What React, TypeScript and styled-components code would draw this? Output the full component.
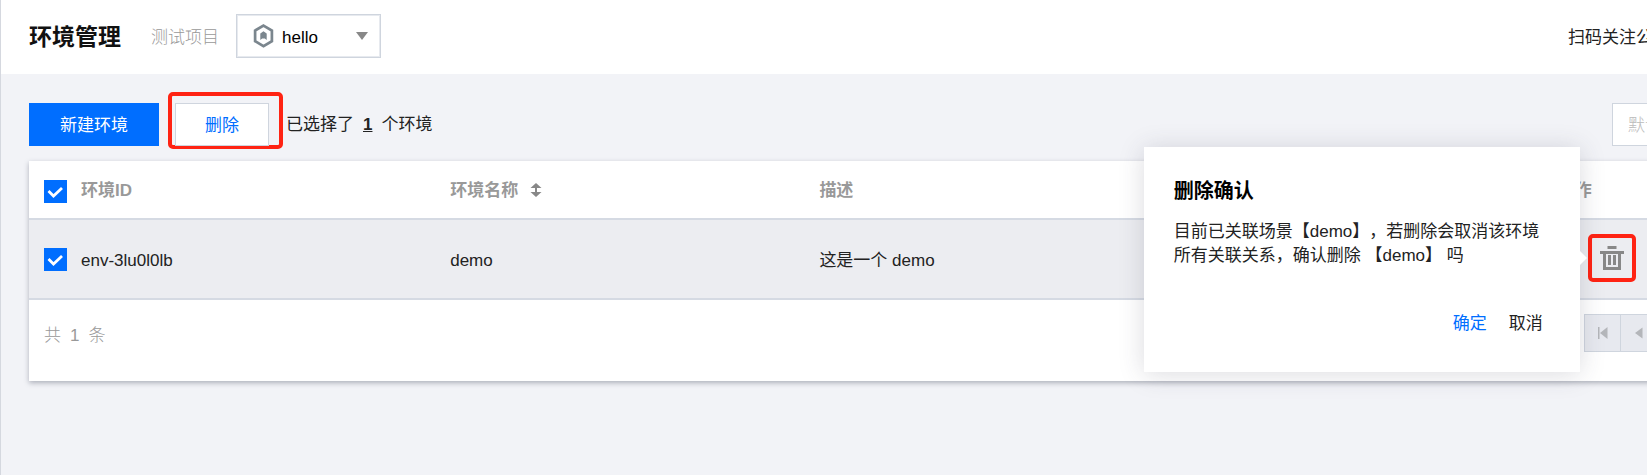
import React, { useState } from 'react';
import styled, { createGlobalStyle } from 'styled-components';

const BLUE = '#006eff';
const LINE = '#cfd5de';
const MUTED = '#999';

const GlobalStyle = createGlobalStyle`
  *, *::before, *::after { box-sizing: border-box; }
  body {
    margin: 0;
    background: #f2f3f7;
    color: #222;
    font: 17px/24px "Liberation Sans", "Noto Sans CJK SC", sans-serif;
    text-spacing-trim: space-all;
  }
  button, input, select { font: inherit; color: inherit; margin: 0; }
`;

const Viewport = styled.div`
  min-height: 100vh;
  overflow: hidden;
  border-left: 1px solid #d5d8df;
`;

/* The console keeps a wide canvas that runs past the right edge of the window. */
const Page = styled.div`
  width: calc(100% + 308px);
`;

const Header = styled.header`
  display: flex;
  align-items: center;
  height: 74px;
  padding: 0 28px;
  background: #fff;
`;

const Title = styled.h1`
  margin: 0 30px 0 0;
  font-size: 23px;
  line-height: 32px;
  color: #111;
`;

const ProjectLabel = styled.label`
  margin: 0 17px 0 0;
  padding-top: 2px;
  color: ${MUTED};
  font-weight: 300;
`;

const SelectBox = styled.div`
  display: flex;
  align-items: center;
  width: 145px;
  height: 44px;
  margin: 0 auto 2px 0;
  padding: 0 12px 0 16px;
  border: 1px solid ${LINE};
  outline: 1px solid #e7eaef;
  outline-offset: -2px;
  background: #fff;
`;

const ProjectSelect = styled.select`
  flex: 1;
  min-width: 0;
  height: 40px;
  padding: 4px 0 0 8px;
  border: 0;
  outline: 0;
  background: transparent;
  appearance: none;
  color: #000;
`;

const FollowLink = styled.a`
  width: 359px;
  padding-top: 2px;
  color: #222;
  text-decoration: none;
`;

const Main = styled.main`
  padding: 29px 28px;
`;

const Toolbar = styled.div`
  display: flex;
  align-items: center;
  height: 43px;
  margin-bottom: 15px;
`;

const Button = styled.button<{ $primary?: boolean }>`
  height: 43px;
  padding: 2px ${p => (p.$primary ? 30 : 29)}px 0;
  border: 1px solid ${p => (p.$primary ? BLUE : LINE)};
  background: ${p => (p.$primary ? BLUE : '#fff')};
  color: ${p => (p.$primary ? '#fff' : BLUE)};
  cursor: pointer;
`;

const Highlight = styled.div`
  display: inline-flex;
  align-items: center;
  justify-content: center;
  border: 4px solid #ff2313;
  border-radius: 5px;
`;

const ButtonHighlight = styled(Highlight)`
  align-self: flex-start;
  align-items: flex-start;
  height: 57px;
  margin: -11px 3px 0 9px;
  padding: 7px 10px 0 3px;
`;

const Count = styled.strong`
  margin: 0 9px;
  text-decoration: underline;
`;

const Search = styled.input`
  width: 315px;
  height: 43px;
  margin-left: auto;
  padding: 2px 15px 0;
  border: 1px solid ${LINE};
  background: #fff;
  &::placeholder { color: #bbb; font-weight: 300; }
`;

const Card = styled.section`
  background: #fff;
  box-shadow: 0 2px 5px rgba(54, 58, 80, 0.36);
`;

const Table = styled.table`
  width: 100%;
  border-collapse: separate;
  border-spacing: 0;
  table-layout: fixed;
`;

const CheckColumn = styled.col`
  width: 52px;
`;

const HeadCell = styled.th`
  height: 59px;
  padding: 3px 0 0;
  border-bottom: 2px solid #d5dae3;
  color: ${MUTED};
  text-align: left;
  &:first-child { padding-left: 15px; }
`;

const Cell = styled.td`
  height: 80px;
  padding: 0;
  border-bottom: 2px solid #d5dae3;
  background: #ecedf1;
  &:first-child { padding-left: 15px; }
`;

const TextCell = styled(Cell)`
  padding-top: 4px;
`;

const Checkbox = styled.input`
  display: block;
  width: 23px;
  height: 23px;
  appearance: none;
  border: 1px solid ${LINE};
  background: #fff;
  &:checked {
    border-color: ${BLUE};
    background: ${BLUE} url("data:image/svg+xml,%3Csvg xmlns='http://www.w3.org/2000/svg' viewBox='0 0 21 21'%3E%3Cpath d='M3.5 10l5 5 8.500-8' fill='none' stroke='white' stroke-width='2.800'/%3E%3C/svg%3E") center / 21px 21px no-repeat;
  }
`;

const SortButton = styled.button`
  margin-left: 8px;
  padding: 0 4px;
  border: 0;
  background: none;
  color: #888;
  vertical-align: -1px;
`;

const Action = styled(Highlight)`
  position: relative;
  width: 48px;
  height: 48px;
  margin: 0 0 2px 30px;
  vertical-align: middle;
`;

const IconButton = styled.button`
  display: flex;
  padding: 0;
  border: 0;
  background: none;
  color: #888;
  cursor: pointer;
`;

const Popover = styled.div`
  position: absolute;
  z-index: 2;
  top: -91px;
  right: calc(100% + 12px);
  width: 436px;
  height: 225px;
  padding: 28px 30px;
  background: #fff;
  box-shadow: 0 2px 24px rgba(54, 58, 80, 0.18);
  &::after {
    content: "";
    position: absolute;
    top: 104px;
    left: 100%;
    border: 7px solid transparent;
    border-left-color: #fff;
    border-right-width: 0;
  }
`;

const PopoverTitle = styled.h2`
  margin: 0 0 13px;
  color: #000;
  font-size: 20px;
  line-height: 32px;
`;

const PopoverText = styled.p`
  margin: 0;
  white-space: nowrap;
`;

const PopoverActions = styled.div`
  display: flex;
  justify-content: flex-end;
  gap: 22px;
  margin: 44px 7px 0 0;
`;

const TextButton = styled.button<{ $accent?: boolean }>`
  padding: 0;
  border: 0;
  background: none;
  color: ${p => (p.$accent ? BLUE : '#222')};
  cursor: pointer;
`;

const Footer = styled.footer`
  display: flex;
  justify-content: space-between;
  height: 81px;
  padding: 14px 15px 0;
`;

const Total = styled.div`
  display: flex;
  gap: 9px;
  padding-top: 10px;
  color: ${MUTED};
  font-weight: 300;
`;

const Pager = styled.nav`
  display: flex;
  width: 328px;
  height: 38px;
  border: 1px solid ${LINE};
`;

const PagerButton = styled.button`
  display: flex;
  align-items: center;
  justify-content: center;
  width: 36px;
  padding: 0;
  border: 0;
  border-right: 1px solid ${LINE};
  background: #e7e9ef;
  color: #b4b6ba;
`;

const PagerStatus = styled.span`
  flex: 1;
  padding-top: 6px;
  text-align: center;
`;

const DownSlot = styled.span`
  display: flex;
  pointer-events: none;
`;

const ProjectIcon = () => (
  <svg width="21" height="24" viewBox="0 0 21 24" aria-hidden="true">
    <path d="M10.500 1.600l8.400 4.900v10.700l-8.400 4.900-8.400-4.900V6.500z" fill="none" stroke="#7b868e" strokeWidth="2.700" />
    <path d="M7.300 16V9.400l3.200-2.200 3.200 2.200V16l-1.900-1.500h-2.600z" fill="#7b868e" />
  </svg>
);

const DownIcon = () => (
  <svg width="12" height="8" viewBox="0 0 12 8" aria-hidden="true">
    <path d="M0 0h12L6 8z" fill="#888" />
  </svg>
);

const SortIcon = () => (
  <svg width="12" height="14" viewBox="0 0 12 14" aria-hidden="true">
    <path d="M6 0l5.500 5H7v4h4.500L6 14 .5 9H5V5H.5z" fill="currentColor" />
  </svg>
);

const TrashIcon = () => (
  <svg width="24" height="24" viewBox="0 0 24 24" aria-hidden="true">
    <path
      d="M7.500 0h9v3h-9zM0 5h24v3h-3v16H3V8H0zM6 8v13h12V8zM8 9h3v10H8zM13 9h3v10h-3z"
      fill="currentColor"
      fillRule="evenodd"
    />
  </svg>
);

const ArrowIcon = ({ bar, flip }: { bar?: boolean; flip?: boolean }) => (
  <svg width="10" height="12" viewBox="0 0 10 12" aria-hidden="true">
    <g transform={flip ? 'rotate(180 5 6)' : undefined}>
      {bar && <path d="M0 0h1.500v12H0z" fill="currentColor" />}
      <path d={bar ? 'M9.500 0v12L2 6z' : 'M8.500 0.500v11L1 6z'} fill="currentColor" />
    </g>
  </svg>
);

export default function App() {
  const [selected, setSelected] = useState(true);
  const toggle = () => setSelected(!selected);

  return (
    <>
      <GlobalStyle />
      <Viewport>
        <Page>
          <Header>
            <Title>环境管理</Title>
            <ProjectLabel htmlFor="project">测试项目</ProjectLabel>
            <SelectBox>
              <ProjectIcon />
              <ProjectSelect id="project" defaultValue="hello">
                <option value="hello">hello</option>
              </ProjectSelect>
              <DownSlot><DownIcon /></DownSlot>
            </SelectBox>
            <FollowLink href="#follow">扫码关注公众号</FollowLink>
          </Header>
          <Main>
            <Toolbar>
              <Button $primary>新建环境</Button>
              <ButtonHighlight><Button>删除</Button></ButtonHighlight>
              <span>已选择了<Count>{selected ? 1 : 0}</Count>个环境</span>
              <Search aria-label="搜索" placeholder="默认搜索" />
            </Toolbar>
            <Card>
              <Table>
                <colgroup><CheckColumn /><col /><col /><col /><col /><col /></colgroup>
                <thead>
                  <tr>
                    <HeadCell><Checkbox type="checkbox" aria-label="全选" checked={selected} onChange={toggle} /></HeadCell>
                    <HeadCell>环境ID</HeadCell>
                    <HeadCell>环境名称<SortButton aria-label="排序"><SortIcon /></SortButton></HeadCell>
                    <HeadCell colSpan={2}>描述</HeadCell>
                    <HeadCell>操作</HeadCell>
                  </tr>
                </thead>
                <tbody>
                  <tr>
                    <Cell><Checkbox type="checkbox" aria-label="env-3lu0l0lb" checked={selected} onChange={toggle} /></Cell>
                    <TextCell>env-3lu0l0lb</TextCell>
                    <TextCell>demo</TextCell>
                    <TextCell colSpan={2}>这是一个 demo</TextCell>
                    <Cell>
                      <Action>
                        <IconButton aria-label="删除"><TrashIcon /></IconButton>
                        <Popover role="dialog" aria-labelledby="confirm-title">
                          <PopoverTitle id="confirm-title">删除确认</PopoverTitle>
                          <PopoverText>
                            目前已关联场景【demo】，若删除会取消该环境<br />
                            所有关联关系，确认删除 【demo】 吗
                          </PopoverText>
                          <PopoverActions>
                            <TextButton $accent>确定</TextButton>
                            <TextButton>取消</TextButton>
                          </PopoverActions>
                        </Popover>
                      </Action>
                    </Cell>
                  </tr>
                </tbody>
              </Table>
              <Footer>
                <Total><span>共</span><span>1</span><span>条</span></Total>
                <Pager aria-label="分页">
                  <PagerButton aria-label="首页"><ArrowIcon bar /></PagerButton>
                  <PagerButton aria-label="上一页"><ArrowIcon /></PagerButton>
                  <PagerStatus>1 / 1 页</PagerStatus>
                  <PagerButton aria-label="下一页"><ArrowIcon flip /></PagerButton>
                  <PagerButton aria-label="末页"><ArrowIcon bar flip /></PagerButton>
                </Pager>
              </Footer>
            </Card>
          </Main>
        </Page>
      </Viewport>
    </>
  );
}
